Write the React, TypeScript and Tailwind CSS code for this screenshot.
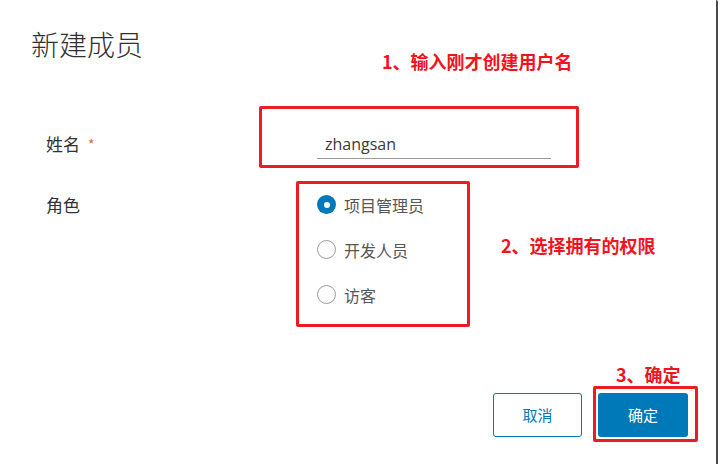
import React from "react"

const cjk = "font-['Noto_Sans_CJK_SC',sans-serif]"

function Radio({ label, checked = false }: { label: string; checked?: boolean }) {
  return (
    <div className="flex h-[45px] items-center gap-[8px]">
      {checked ? (
        <span className="flex h-[19px] w-[19px] items-center justify-center rounded-full bg-[#0079b8]">
          <span className="h-[6px] w-[6px] rounded-full bg-white" />
        </span>
      ) : (
        <span className="h-[19px] w-[19px] rounded-full border border-[#9a9a9a] bg-white" />
      )}
      <span className="text-[16px] text-[#565656]">{label}</span>
    </div>
  )
}

function Note({ className, children }: { className: string; children: React.ReactNode }) {
  return (
    <div className={`absolute text-[18px] leading-[24px] font-bold text-[#f0141e] ${className}`}>{children}</div>
  )
}

function RedBox({ className }: { className: string }) {
  return <div className={`pointer-events-none absolute border-[3px] border-[#ec1c24] rounded-[2px] ${className}`} />
}

export default function App() {
  return (
    <div className={`relative flex h-[464px] w-[720px] overflow-hidden bg-white ${cjk}`}>
      <div className="flex w-[716px] flex-col">
        <div className="h-[124px] pt-[25px] pl-[31px]">
          <h1 className="text-[28px] leading-[38px] font-light text-[#313131]">新建成员</h1>
        </div>

        <div className="flex h-[40px] items-center">
          <div className="flex w-[317px] items-center pl-[46px] text-[17px] text-[#313131]">
            姓名
            <span className="ml-[8px] text-[14px] text-[#e8684a]">*</span>
          </div>
          <div className="flex h-[30px] w-[234px] items-center border-b border-[#9a9a9a] pl-[8px] font-['Open_Sans',sans-serif] text-[16px] text-[#3a3a3a]">
            zhangsan
          </div>
        </div>

        <div className="mt-[18px] flex">
          <div className="flex h-[45px] w-[317px] items-center pl-[46px] text-[17px] text-[#313131]">角色</div>
          <div className="flex flex-col">
            <Radio label="项目管理员" checked />
            <Radio label="开发人员" />
            <Radio label="访客" />
          </div>
        </div>

        <div className="mt-[76px] flex justify-end gap-[16px] pr-[28px]">
          <button className="h-[44px] w-[89px] rounded-[3px] border border-[#0079b8] bg-white text-[15px] text-[#0079b8]">
            取消
          </button>
          <button className="h-[44px] w-[90px] rounded-[3px] bg-[#0079b8] text-[15px] text-white">确定</button>
        </div>
      </div>
      <div className="w-[2px] rounded-tr-[3px] bg-[#4a4a4a]" />
      <div className="w-[2px] bg-white" />

      <RedBox className="left-[259px] top-[106px] h-[62px] w-[320px]" />
      <RedBox className="left-[296px] top-[181px] h-[146px] w-[174px]" />
      <RedBox className="left-[593px] top-[386px] h-[56px] w-[105px]" />

      <Note className="left-[382px] top-[49px]">1、输入刚才创建用户名</Note>
      <Note className="left-[501px] top-[233px]">2、选择拥有的权限</Note>
      <Note className="left-[616px] top-[362px]">3、确定</Note>
    </div>
  )
}
